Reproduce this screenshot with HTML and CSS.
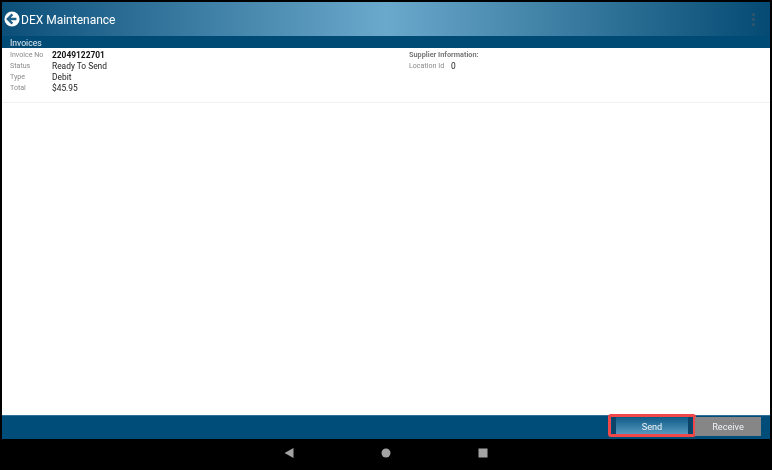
FILE: index.html
```html
<!DOCTYPE html>
<html lang="en">
<head>
    <meta charset="UTF-8">
    <meta name="viewport" content="width=device-width, initial-scale=1.0">
    <title>DEX Maintenance</title>
    <link rel="stylesheet" href="styles.css">
</head>
<body>
    <div class="app">
        <header class="app-bar">
            <svg class="back-icon" viewBox="0 0 18 18" width="16" height="16">
                <circle cx="9" cy="9" r="8.5" fill="#fff"/>
                <path d="M9.4 3.8 4.2 9l5.2 5.2 M4.6 9h9.4" fill="none" stroke="#1c5f88" stroke-width="2.6"/>
            </svg>
            <h1 class="app-title">DEX Maintenance</h1>
            <div class="more-icon"><span></span><span></span><span></span></div>
        </header>

        <div class="section-bar">Invoices</div>

        <main class="content">
            <section class="invoice">
                <div class="invoice-col">
                    <div class="row"><span class="label">Invoice No</span><span class="value strong">22049122701</span></div>
                    <div class="row"><span class="label">Status</span><span class="value">Ready To Send</span></div>
                    <div class="row"><span class="label">Type</span><span class="value">Debit</span></div>
                    <div class="row"><span class="label">Total</span><span class="value">$45.95</span></div>
                </div>
                <div class="supplier-col">
                    <div class="row"><span class="supplier-title">Supplier Information:</span></div>
                    <div class="row"><span class="label label-short">Location Id</span><span class="value">0</span></div>
                </div>
            </section>
        </main>

        <footer class="action-bar">
            <div class="send-wrap">
                <button class="btn btn-send">Send</button>
                <div class="highlight"></div>
            </div>
            <button class="btn btn-receive">Receive</button>
        </footer>
    </div>

    <nav class="nav-bar">
        <svg viewBox="0 0 10 12" width="10" height="12"><path d="M9.5 1v10L.5 6z" fill="#a3a3a3"/></svg>
        <svg viewBox="0 0 10 10" width="10" height="10"><circle cx="5" cy="5" r="4.5" fill="#a3a3a3"/></svg>
        <svg viewBox="0 0 10 10" width="10" height="10"><rect x=".5" y=".5" width="9" height="9" fill="#a3a3a3"/></svg>
    </nav>
</body>
</html>
```

FILE: styles.css
```css
* {
    box-sizing: border-box;
}
html, body {
    height: 100%;
}
body {
    margin: 0;
    height: 470px;
    overflow: hidden;
    background-color: #000;
    font-family: Roboto, "Liberation Sans", sans-serif;
    display: flex;
    flex-direction: column;
}
.app {
    flex: 1;
    margin: 2px 2px 0;
    display: flex;
    flex-direction: column;
    min-height: 0;
}
.app-bar {
    height: 34px;
    display: flex;
    align-items: center;
    padding: 0 15px 0 2px;
    background: linear-gradient(to right, #0b4f79 0%, #6ba9cc 50%, #044a72 100%);
    filter: blur(0.3px);
}
.back-icon {
    flex: none;
}
.app-title {
    margin: 1px 0 0 1px;
    font-size: 12px;
    font-weight: 400;
    color: #fff;
    flex: 1;
}
.more-icon {
    display: flex;
    flex-direction: column;
    gap: 2px;
}
.more-icon span {
    width: 3px;
    height: 3px;
    background-color: #34556a;
    border-radius: 50%;
}
.section-bar {
    height: 12px;
    padding-left: 8px;
    background-color: #004b75;
    color: #e6eef3;
    font-size: 8.6px;
    line-height: 14px;
    filter: blur(0.2px);
}
.content {
    flex: 1;
    background-color: #fff;
    min-height: 0;
}
.invoice {
    height: 55px;
    display: flex;
    border-bottom: 1px solid #f0f0f0;
    padding-top: 1px;
    filter: blur(0.25px);
}
.invoice-col {
    width: 407px;
    padding-left: 8px;
}
.row {
    display: flex;
    height: 11px;
    align-items: center;
}
.label {
    width: 42px;
    font-size: 7.1px;
    color: #8a8a8a;
}
.value {
    font-size: 8.4px;
    color: #222;
}
.strong {
    font-weight: 700;
    color: #111;
}
.supplier-title {
    font-size: 7.3px;
    font-weight: 700;
    color: #777;
}
.action-bar {
    height: 24px;
    flex: none;
    background-color: #004d79;
    border-top: 1px solid #2f7099;
    display: flex;
    justify-content: flex-end;
    align-items: flex-end;
    padding: 0 9px 3px 0;
}
.send-wrap {
    position: relative;
    margin-right: 3px;
}
.btn {
    display: block;
    height: 19px;
    border: none;
    padding: 0;
    font-family: inherit;
    font-size: 9.2px;
    color: #eef3f6;
    filter: blur(0.2px);
}
.btn-send {
    width: 80px;
    background: linear-gradient(to bottom, #0f5a86, #5d9fc4);
    border-left: 4px solid #0b4468;
    border-right: 4px solid #0b4468;
}
.btn-receive {
    width: 66px;
    background-color: #868686;
}
.highlight {
    position: absolute;
    left: -4px;
    right: -4px;
    top: -3px;
    bottom: -1px;
    border: 3px solid #f04848;
    border-radius: 3px;
}
.nav-bar {
    height: 31px;
    flex: none;
    display: flex;
    justify-content: center;
    align-items: center;
    gap: 87px;
    background-color: #000;
    padding-bottom: 3px;
}
```
